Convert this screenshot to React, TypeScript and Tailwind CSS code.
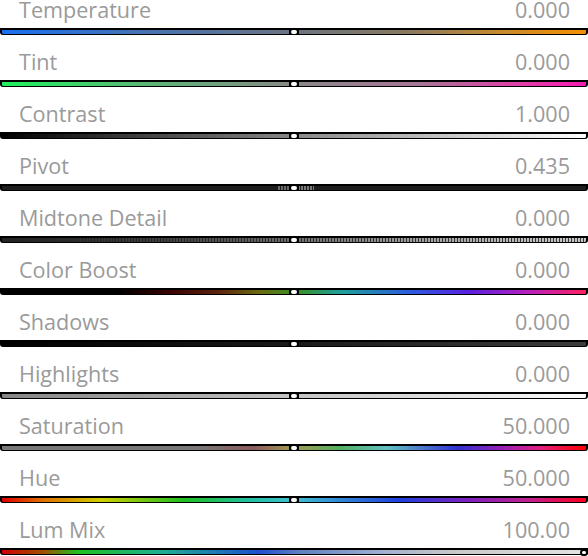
import React from 'react'

type Row = {
  label: string
  value: string
  track: string
  thumb?: 'center' | 'end'
  ticks?: boolean
}

const rows: Row[] = [
  {
    label: 'Temperature',
    value: '0.000',
    track: 'bg-[linear-gradient(90deg,#1a6ff0_0%,#4873b0_25%,#6c7482_50%,#8a7a5e_70%,#c58a30_85%,#f59000_100%)]',
  },
  {
    label: 'Tint',
    value: '0.000',
    track: 'bg-[linear-gradient(90deg,#1ef25e_0%,#5cb676_25%,#888888_50%,#a87496_72%,#e040a8_88%,#f51cb4_100%)]',
  },
  {
    label: 'Contrast',
    value: '1.000',
    track: 'bg-[linear-gradient(90deg,#000000_0%,#888888_50%,#ffffff_100%)]',
  },
  {
    label: 'Pivot',
    value: '0.435',
    track: 'bg-[#1e1e1e]',
    ticks: true,
  },
  {
    label: 'Midtone Detail',
    value: '0.000',
    track:
      'bg-[image:linear-gradient(90deg,rgba(34,34,34,1)_0%,rgba(34,34,34,0.85)_25%,rgba(34,34,34,0.55)_50%,rgba(34,34,34,0.2)_75%,rgba(34,34,34,0)_100%),repeating-linear-gradient(90deg,#c8c8c8_0px,#c8c8c8_2px,#3a3a3a_2px,#3a3a3a_3px)]',
  },
  {
    label: 'Color Boost',
    value: '0.000',
    track:
      'bg-[linear-gradient(90deg,#000000_0%,#000000_20%,#3c0402_29%,#5e2410_37%,#6a6a10_44%,#3a9020_50%,#20a09a_58%,#2c5ce0_70%,#5a20e0_80%,#b820c0_90%,#ff2060_100%)]',
  },
  {
    label: 'Shadows',
    value: '0.000',
    track: 'bg-[linear-gradient(90deg,#000000_0%,#1a1a1a_50%,#3c3c3c_100%)]',
  },
  {
    label: 'Highlights',
    value: '0.000',
    track: 'bg-[linear-gradient(90deg,#858585_0%,#c4c4c4_50%,#fcfcfc_100%)]',
  },
  {
    label: 'Saturation',
    value: '50.000',
    track:
      'bg-[linear-gradient(90deg,#777777_0%,#777777_33%,#8a5c5c_43%,#a09a50_50%,#52b060_58%,#62c0c4_66%,#3030d0_78%,#9a20b4_86%,#e02080_92%,#ff0000_100%)]',
  },
  {
    label: 'Hue',
    value: '50.000',
    track:
      'bg-[linear-gradient(90deg,#e00000_0%,#e07000_7%,#d0d000_17%,#20c020_31%,#20c0a0_42%,#40c0d0_50%,#2040e0_68%,#8020c0_80%,#c02090_90%,#ff0020_100%)]',
  },
  {
    label: 'Lum Mix',
    value: '100.00',
    track:
      'bg-[linear-gradient(90deg,#d00000_0%,#a05000_7%,#20c020_13%,#20b090_27%,#2050d0_44%,#6080c0_51%,#a0b0d0_65%,#c8c8c8_77%,#e4e4e4_100%)]',
    thumb: 'end',
  },
]

function Thumb() {
  return (
    <div className="absolute top-0 bottom-0 left-1/2 -translate-x-1/2 bg-black px-[2px] flex">
      <div className="w-[6px] h-full rounded-full bg-white" />
    </div>
  )
}

function EndThumb() {
  return (
    <div className="absolute -top-[1px] -right-[2px] w-[8px] h-[7px] rounded-full bg-white border-2 border-black" />
  )
}

function PivotTicks() {
  return (
    <>
      <div className="absolute top-0 bottom-0 left-[276px] w-[12px] bg-[repeating-linear-gradient(90deg,#6a6a6a_0px,#6a6a6a_2px,#1e1e1e_2px,#1e1e1e_3px)]" />
      <div className="absolute top-0 bottom-0 left-[296px] w-[16px] bg-[repeating-linear-gradient(90deg,#7a7a7a_0px,#7a7a7a_2px,#1e1e1e_2px,#1e1e1e_3px)]" />
    </>
  )
}

function Slider({ row }: { row: Row }) {
  return (
    <div className="h-[52px] flex flex-col">
      <div className="h-[28px] flex items-start justify-between pl-[19px] pr-[18px] text-[21.6px] leading-[20px] text-[#9a9a9a]">
        <span>{row.label}</span>
        <span>{row.value}</span>
      </div>
      <div className={`relative h-[7px] border-x-2 border-t-2 border-b border-black rounded-b-[3px] ${row.track}`}>
        {row.ticks && <PivotTicks />}
        {row.thumb === 'end' ? <EndThumb /> : <Thumb />}
      </div>
    </div>
  )
}

export default function App() {
  return (
    <div className="w-[588px] h-[556px] overflow-hidden bg-white font-['Open_Sans',sans-serif]">
      {rows.map((row) => (
        <Slider key={row.label} row={row} />
      ))}
    </div>
  )
}
